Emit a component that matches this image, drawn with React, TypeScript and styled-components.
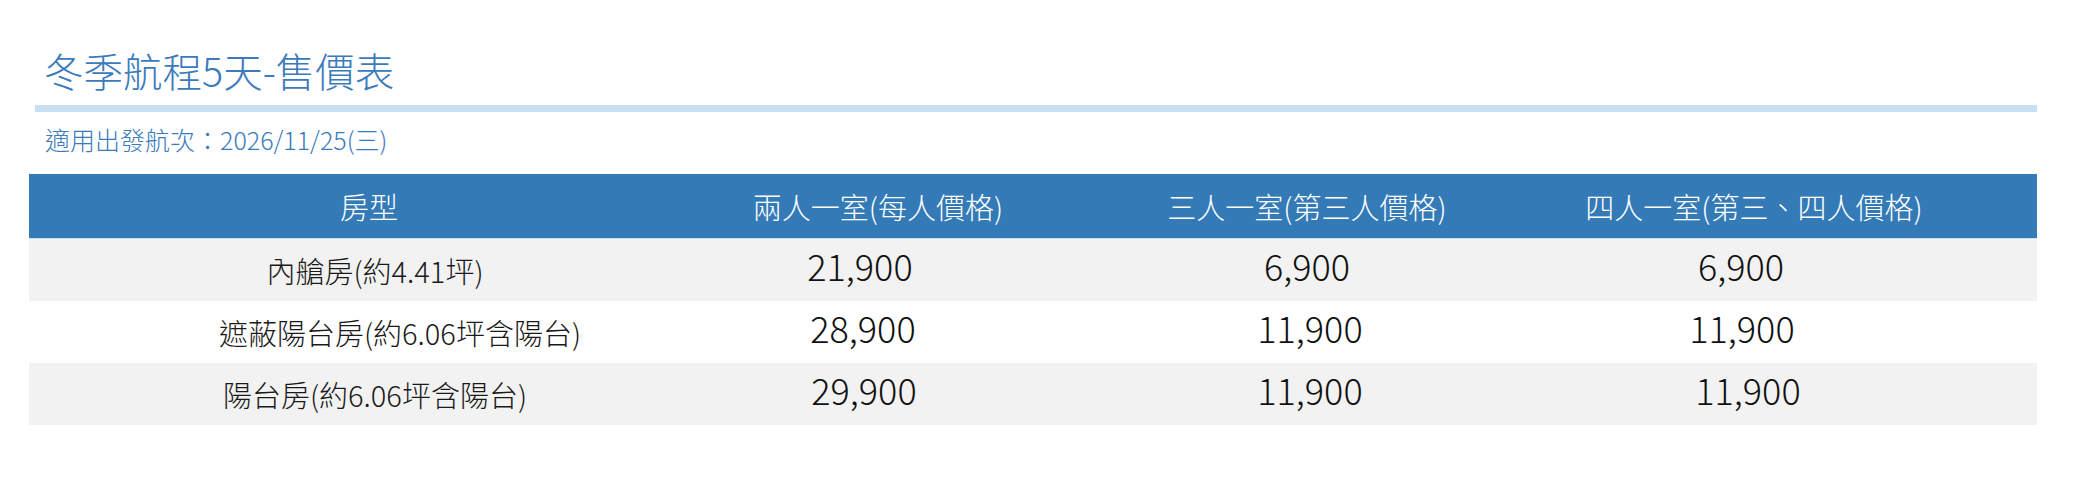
import React from "react";
import styled, { createGlobalStyle } from "styled-components";

type Cell = { text: string; nudge?: number };

type Row = {
  label: Cell;
  prices: Cell[];
};

const headers: Cell[] = [
  { text: "房型" },
  { text: "兩人一室(每人價格)" },
  { text: "三人一室(第三人價格)" },
  { text: "四人一室(第三、四人價格)", nudge: -48 },
];

const rows: Row[] = [
  {
    label: { text: "內艙房(約4.41坪)", nudge: 6 },
    prices: [
      { text: "21,900", nudge: -18 },
      { text: "6,900" },
      { text: "6,900", nudge: -61 },
    ],
  },
  {
    label: { text: "遮蔽陽台房(約6.06坪含陽台)", nudge: 31 },
    prices: [
      { text: "28,900", nudge: -15 },
      { text: "11,900", nudge: 3 },
      { text: "11,900", nudge: -60 },
    ],
  },
  {
    label: { text: "陽台房(約6.06坪含陽台)", nudge: 6 },
    prices: [
      { text: "29,900", nudge: -14 },
      { text: "11,900", nudge: 3 },
      { text: "11,900", nudge: -54 },
    ],
  },
];

const columnWidths = [680, 338, 520, 470];

const App = () => {
  return (
    <>
      <GlobalStyle />
      <Page>
        <Heading>冬季航程5天-售價表</Heading>
        <Rule />
        <Departure>適用出發航次：2026/11/25(三)</Departure>
        <PriceTable>
          <colgroup>
            {columnWidths.map((w, i) => (
              <col key={i} style={{ width: w }} />
            ))}
          </colgroup>
          <thead>
            <tr>
              {headers.map((h) => (
                <HeadCell key={h.text} $nudge={h.nudge}>
                  {h.text}
                </HeadCell>
              ))}
            </tr>
          </thead>
          <tbody>
            {rows.map((row, i) => (
              <BodyRow key={row.label.text} $striped={i % 2 === 0}>
                <LabelCell $nudge={row.label.nudge}>{row.label.text}</LabelCell>
                {row.prices.map((p, j) => (
                  <PriceCell key={j} $nudge={p.nudge}>
                    {p.text}
                  </PriceCell>
                ))}
              </BodyRow>
            ))}
          </tbody>
        </PriceTable>
      </Page>
    </>
  );
};

export default App;

const GlobalStyle = createGlobalStyle`
  html, body {
    margin: 0;
    padding: 0;
    background: #fff;
  }
  body {
    font-family: "Noto Sans CJK TC", "Noto Sans", sans-serif;
    font-weight: 300;
  }
`;

const Page = styled.div`
  width: 2008px;
  padding: 0 0 0 29px;
`;

const Heading = styled.h2`
  margin: 0;
  padding: 46px 0 12px 15px;
  font-size: 39.5px;
  line-height: 47px;
  font-weight: 300;
  color: #3b7bbd;
`;

const Rule = styled.div`
  height: 7px;
  margin-left: 6px;
  background-color: #c8e0f4;
`;

const Departure = styled.p`
  margin: 0;
  padding: 11px 0 19px 16px;
  font-size: 25px;
  line-height: 32px;
  color: #3b7bbd;
`;

const PriceTable = styled.table`
  width: 2008px;
  table-layout: fixed;
  border-collapse: collapse;
`;

// shifts the centred text sideways by the given number of pixels
const nudgeStyle = ({ $nudge = 0 }: { $nudge?: number }) =>
  $nudge >= 0
    ? `padding-left: ${$nudge * 2}px;`
    : `padding-right: ${-$nudge * 2}px;`;

const HeadCell = styled.th<{ $nudge?: number }>`
  height: 64px;
  padding: 0;
  background-color: #337ab7;
  border-bottom: 1px solid #cfe3f6;
  color: #fff;
  font-size: 29px;
  font-weight: 300;
  text-align: center;
  ${nudgeStyle}
`;

const BodyRow = styled.tr<{ $striped: boolean }>`
  height: 62px;
  background-color: ${({ $striped }) => ($striped ? "#f2f2f2" : "#fff")};
`;

const LabelCell = styled.td<{ $nudge?: number }>`
  padding: 0;
  color: #1a1a1a;
  font-size: 29px;
  text-align: center;
  ${nudgeStyle}
`;

const PriceCell = styled.td<{ $nudge?: number }>`
  padding: 0 0 10px;
  color: #111;
  font-size: 36px;
  text-align: center;
  ${nudgeStyle}
`;
